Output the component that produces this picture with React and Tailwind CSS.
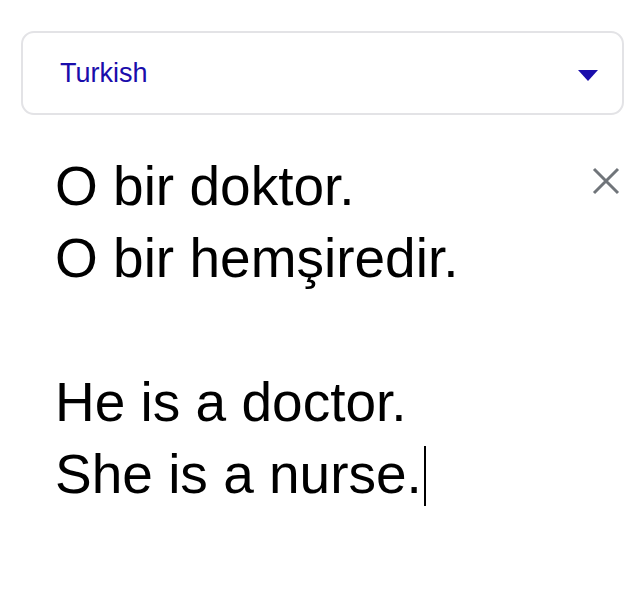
import React from 'react';

const lines = ['O bir doktor.', 'O bir hemşiredir.', '', 'He is a doctor.'];

const App = () => {
    return (
        <div className="w-[643px] h-[599px] bg-white pt-[31px] pl-[21px]" style={{ fontFamily: '"Liberation Sans", Arial, sans-serif' }}>
            {/* language select */}
            <div className="w-[603px] h-[84px] border-2 border-[#e3e3e6] rounded-[13px] flex items-center justify-between pl-[37px] pr-[24px]">
                <span className="text-[27px] text-[#1a0dab] leading-none">Turkish</span>
                <svg width="20" height="11" viewBox="0 0 20 11" className="mt-[5px]">
                    <polygon points="0,0 20,0 10,11" fill="#1a0dab" />
                </svg>
            </div>

            {/* text area */}
            <div className="flex justify-between mt-[35px] pl-[34px] pr-[23px]">
                <div className="text-[55px] leading-[72px] text-black">
                    {lines.map((l, i) => (
                        <div key={i} className="h-[72px]">{l}</div>
                    ))}
                    <div className="h-[72px] flex items-center">
                        <span>She is a nurse.</span>
                        <span className="inline-block w-[2px] h-[60px] bg-black ml-[2px] mt-[3px]"></span>
                    </div>
                </div>
                <svg width="28" height="28" viewBox="0 0 28 28" className="mt-[17px]">
                    <path d="M2 2 L26 26 M26 2 L2 26" stroke="#70757a" strokeWidth="3" />
                </svg>
            </div>
        </div>
    );
};

export default App;
